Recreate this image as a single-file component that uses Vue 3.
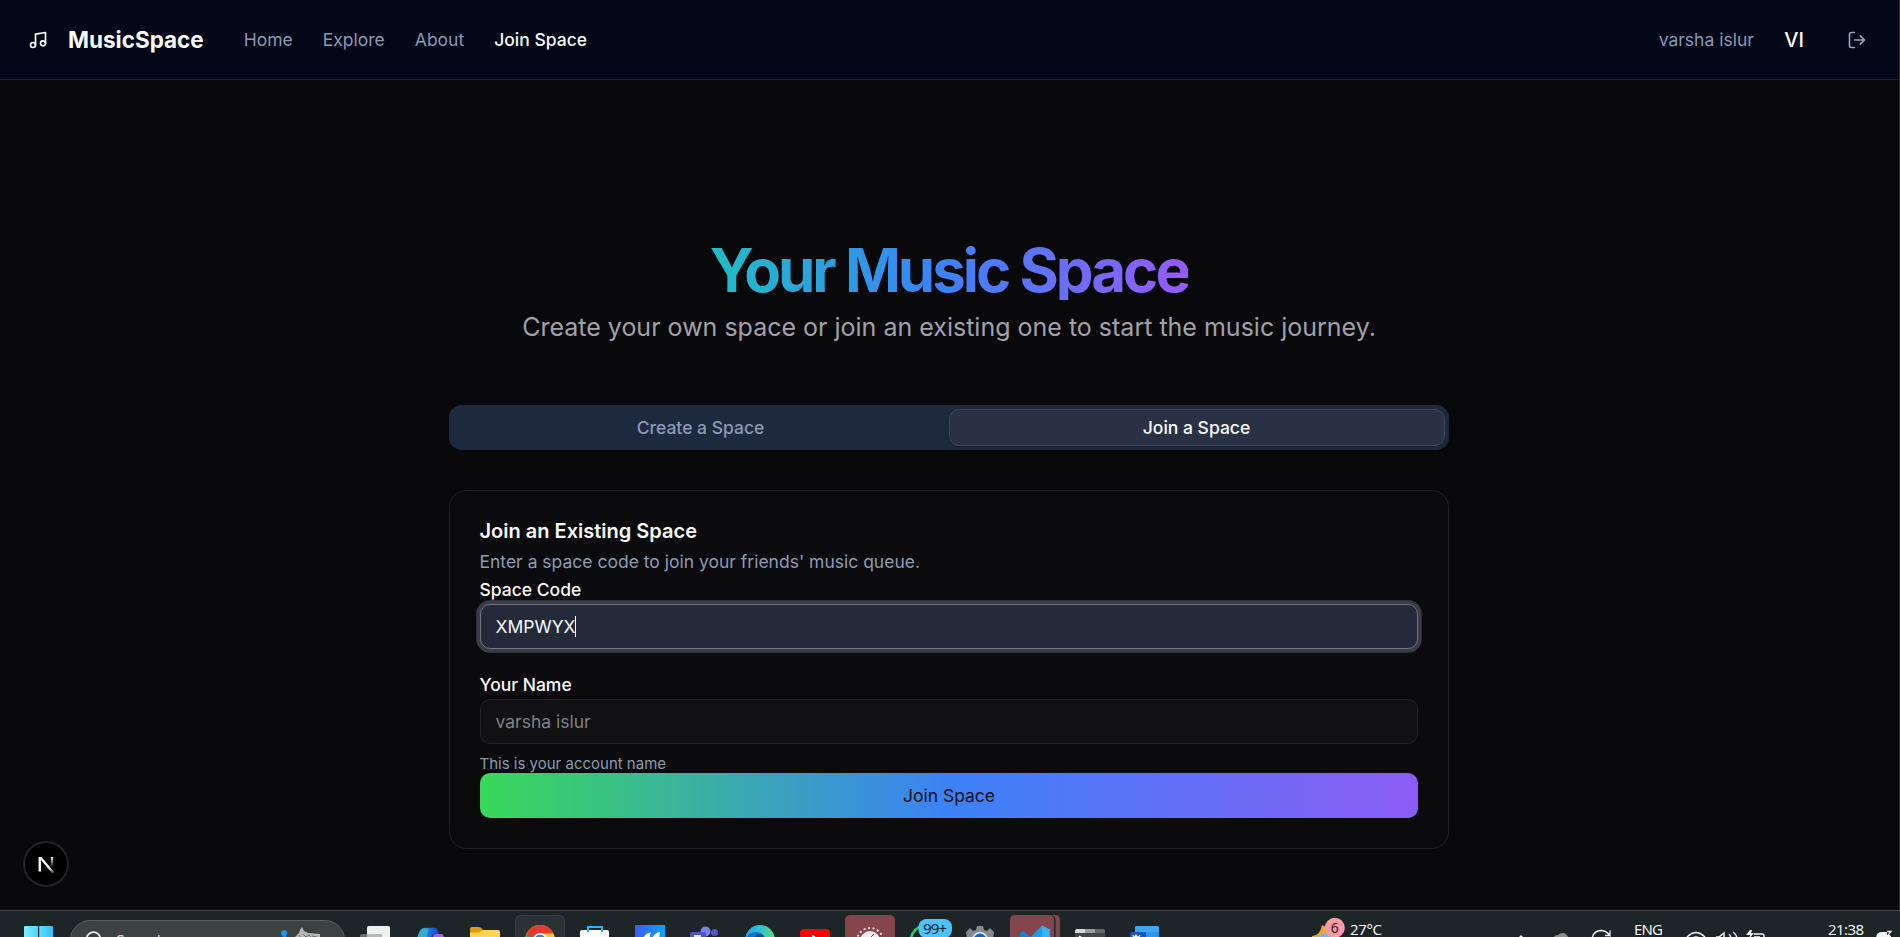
<script setup>
const links = ['Home', 'Explore', 'About']
</script>

<template>
  <div class="screen">
    <header class="topbar">
      <svg class="icon" viewBox="0 0 24 24"><path d="M9 18V5l12-2v13" /><circle cx="6" cy="18" r="3" /><circle cx="18" cy="16" r="3" /></svg>
      <span class="brand">MusicSpace</span>
      <nav>
        <a v-for="l in links" :key="l">{{ l }}</a>
        <a class="on">Join Space</a>
      </nav>
      <span class="user">varsha islur</span>
      <span class="initials">VI</span>
      <svg class="icon logout" viewBox="0 0 24 24"><path d="M9 21H5a2 2 0 0 1-2-2V5a2 2 0 0 1 2-2h4M16 17l5-5-5-5M21 12H9" /></svg>
    </header>

    <main>
      <h1><span>Your Music Space</span></h1>
      <p class="lead">Create your own space or join an existing one to start the music journey.</p>
      <div class="tabs">
        <div class="tab">Create a Space</div>
        <div class="tab active">Join a Space</div>
      </div>
      <section class="card">
        <h2>Join an Existing Space</h2>
        <p class="desc">Enter a space code to join your friends' music queue.</p>
        <div class="label">Space Code</div>
        <div class="field focused"><span>XMPWYX</span><i class="caret"></i></div>
        <div class="label second">Your Name</div>
        <div class="field disabled"><span>varsha islur</span></div>
        <p class="help">This is your account name</p>
        <div class="submit">Join Space</div>
      </section>
    </main>

    <div class="edge"></div>
    <svg class="badge-n" viewBox="0 0 48 48">
      <defs>
        <linearGradient id="nd" x1="0" y1="0" x2="0" y2="1"><stop offset=".65" stop-color="#fff" /><stop offset="1" stop-color="#fff" stop-opacity="0.1" /></linearGradient>
        <linearGradient id="nv" gradientUnits="userSpaceOnUse" x1="0" y1="16" x2="0" y2="28"><stop offset="0" stop-color="#fff" /><stop offset="1" stop-color="#fff" stop-opacity="0" /></linearGradient>
      </defs>
      <circle cx="24" cy="24" r="22" fill="#000" stroke="#242426" stroke-width="2" />
      <path d="M16.600 17h2.400v14.500h-2.400z" fill="#fff" />
      <path d="M16.600 17h2.800l13 15.200l-2 1.600z" fill="url(#nd)" />
      <path d="M28.800 17h2.400v11h-2.400z" fill="url(#nv)" />
    </svg>

    <footer class="taskbar">
      <svg class="cell start" viewBox="0 0 50 22">
        <defs><linearGradient id="win" x1="0" x2="1"><stop offset="0" stop-color="#7eeeff" /><stop offset="1" stop-color="#4fd3fa" /></linearGradient><linearGradient id="win2" x1="0" x2="1"><stop offset="0" stop-color="#5bdcfc" /><stop offset="1" stop-color="#36bcf6" /></linearGradient></defs>
        <path d="M10 12q0-1 1-1h13v13H10z" fill="url(#win)" /><path d="M25.200 11h12.800q1 0 1 1v12H25.200z" fill="url(#win2)" />
      </svg>
      <div class="search">
        <svg class="lens" viewBox="0 0 20 17"><circle cx="9.500" cy="8" r="6.800" fill="none" stroke="#e8eaea" stroke-width="1.800" /></svg>
        <span>Search</span>
        <svg class="art" viewBox="0 0 44 17">
          <path d="M2 5q0-3 4-3q3 1 2 4l-1 2q2 6-1 11H4q2-6 1-10Q2 8 2 5z" fill="#1893ee" />
          <path d="M16 9l4-4 1-3 2-3 2 4 4 2 12 1v5l-2-2-3 1v8H22l-3-6-3 1z" fill="#b9b9b3" />
          <path d="M24 6l3 3 3-2 3 3M20 7l2 3M28 12l5 1 3-3M33 8l5 1" stroke="#676a66" fill="none" stroke-width="1" />
        </svg>
      </div>
      <div class="apps">
        <svg class="cell" viewBox="0 0 50 22"><rect x="17" y="11" width="23" height="14" rx="1.500" fill="#eeefef" /><path d="M10 21q0-2 2-2h5v5h-7z" fill="#686d6d" /><path d="M17 19h14q1 0 1 1v4H17z" fill="#b7b9b9" /></svg>
        <svg class="cell" viewBox="0 0 50 22">
          <defs><linearGradient id="cp"><stop offset="0" stop-color="#2bb5d8" /><stop offset=".6" stop-color="#1e6fe0" /><stop offset="1" stop-color="#1745b4" /></linearGradient></defs>
          <path d="M12 24q2-9 5-10.500q1-.7 3-.7h9q3 0 4 3l1 3-6 1-3 4z" fill="url(#cp)" /><path d="M12 24q3-10 8-11q4 0 3 4l-2 7z" fill="#35aeca" /><path d="M27 24q1-5 4-5h5q3 0 3 5z" fill="#b15ce0" />
        </svg>
        <svg class="cell" viewBox="0 0 50 22"><path d="M10 14q0-2 2-2h7q2 0 4 3h7v8H10z" fill="#dd9b08" /><path d="M10 17.500h9l4-2.500h15q2 0 2 2v6H10z" fill="#ffd355" /></svg>
        <svg class="cell" viewBox="0 0 50 22">
          <rect x=".5" y=".5" width="49" height="30" rx="5" fill="#2b3233" stroke="#3a4142" />
          <circle cx="25" cy="25" r="15" fill="#fbc934" /><path d="M25 25L11.300 19A15 15 0 0 0 12 33z" fill="#23a455" /><path d="M11.500 18.500A15 15 0 0 1 38.500 18.500H25L17 25z" fill="#e33b2e" /><circle cx="25" cy="25" r="7" fill="#fff" /><circle cx="25" cy="25" r="5.500" fill="#3b7de8" />
        </svg>
        <svg class="cell" viewBox="0 0 50 22"><path d="M18 17v-5h14v5" fill="none" stroke="#28b6ee" stroke-width="2" /><path d="M10 24v-7q0-2 2-2h25q2 0 2 2v7z" fill="#fbfbfb" /><path d="M18 14v3M32 14v3" stroke="#28b6ee" stroke-width="2" /></svg>
        <svg class="cell" viewBox="0 0 50 22">
          <defs><linearGradient id="bl"><stop offset="0" stop-color="#3a5cf6" /><stop offset="1" stop-color="#0ba4ff" /></linearGradient></defs>
          <rect x="10" y="10" width="30" height="14" fill="url(#bl)" /><path d="M18 24q2-6 8-6.500l-2 6.500zM27 24q2-6 8-7l-1 7z" fill="#fff" />
        </svg>
        <svg class="cell" viewBox="0 0 50 22"><circle cx="25.500" cy="16.500" r="5" fill="#7b83eb" /><circle cx="34.500" cy="17.500" r="3.500" fill="#5059c9" /><rect x="10" y="17" width="16" height="8" rx="1.500" fill="#4c55bd" /><path d="M14 21h7" stroke="#fff" stroke-width="1.700" /></svg>
        <svg class="cell" viewBox="0 0 50 22">
          <defs><linearGradient id="ed"><stop offset="0" stop-color="#2a9be0" /><stop offset=".5" stop-color="#2fc2dc" /><stop offset="1" stop-color="#5cdb67" /></linearGradient></defs>
          <circle cx="25" cy="25" r="15" fill="url(#ed)" /><path d="M10 25q3-8 12-8q6 1 8 6H10z" fill="#0c74c8" /><path d="M19 24q1-4 5-5q5 1 6 4z" fill="#114d8e" />
        </svg>
        <svg class="cell" viewBox="0 0 50 22"><rect x="10" y="14" width="30" height="20" rx="4" fill="#f90303" /><path d="M22 19.500l6 4h-6z" fill="#fff" /></svg>
        <svg class="cell" viewBox="0 0 50 22">
          <rect width="50" height="30" rx="5" fill="#84454c" /><circle cx="25" cy="26" r="10" fill="#f5eeee" /><circle cx="25" cy="26" r="13" fill="none" stroke="#efdfe0" stroke-width="2.200" stroke-dasharray=".1 4.500" stroke-linecap="round" /><path d="M26 22l3-3" stroke="#84454c" />
        </svg>
        <svg class="cell whats" viewBox="0 0 50 22"><circle cx="25" cy="25" r="14" fill="none" stroke="#2bcf68" stroke-width="2.500" /><rect x="18.500" y="4" width="33.500" height="19" rx="8" fill="#4cc2ff" /><text x="23" y="19" class="count" textLength="24">99+</text></svg>
        <svg class="cell" viewBox="0 0 50 22"><path d="M21 15l1-4h6l1 4 3 1 3-3 4 4-1 7H12l-1-7 4-4 3 3z" fill="#858a91" /><circle cx="25" cy="25" r="8" fill="#e2e7eb" /><circle cx="25" cy="25" r="6.500" fill="#1767af" /></svg>
        <svg class="cell" viewBox="0 0 50 22">
          <path d="M5 0h34q5 0 5 5v17H0V5q0-5 5-5zM41.500 0h3.500q5 0 5 5v17h-4.500V5q0-3.500-4-5z" fill="#84454c" />
          <path d="M10 18l3-2 9 7H10z" fill="#1a80cd" /><path d="M19 24l13-13.500V24z" fill="#209de8" /><path d="M32 10.500l8 4V24h-8z" fill="#36b2f5" />
        </svg>
        <svg class="cell" viewBox="0 0 50 22"><rect x="10" y="14" width="30" height="12" rx="1.500" fill="#424445" /><path d="M10 18v-2q0-2 2-2h8v4z" fill="#d7d7d7" /><path d="M20 14h10v4H20z" fill="#9d9e9f" /><path d="M30 14h8q2 0 2 2v2H30z" fill="#656769" /><path d="M14 21l3 2" stroke="#fff" stroke-width="1.500" /></svg>
        <svg class="cell" viewBox="0 0 50 22"><path d="M15 24V13q0-2 2-2h20q2 0 2 2v11z" fill="#3096e8" /><path d="M15 13q0-2 2-2h20q2 0 2 2v4H15z" fill="#42a5ee" /><rect x="10" y="17" width="16" height="8" rx="1.500" fill="#1657c1" /><path d="M13 20l1 3 2-3 2 3 2-3" stroke="#fff" fill="none" stroke-width="1.200" /></svg>
      </div>
      <svg class="weather" viewBox="0 0 76 22">
        <path d="M2 21q8 0 10-11q6 2 8 6v7H2z" fill="#eda62b" /><ellipse cx="15" cy="22" rx="7" ry="3.500" fill="#86aef5" /><circle cx="24.800" cy="12.800" r="10" fill="#ff99a4" />
        <text x="20.800" y="17.500" class="six">6</text><text x="40" y="20" class="sys" textLength="32">27°C</text>
      </svg>
      <svg class="tray" viewBox="0 0 386 22">
        <path d="M8 24l3-3 3 3" stroke="#f0f0f0" fill="none" stroke-width="1.500" />
        <path d="M43 24q1-4 5-4 2-2 5-2t5 4l2 2z" fill="#8a8e8f" />
        <path d="M82 24q1-8 9-8.500q5 0 9 5v-5M100 20.500h-5" fill="none" stroke="#eee" stroke-width="1.300" />
        <text x="124" y="20" class="sys" textLength="29">ENG</text>
        <path d="M177 22q9-9 18 0M181 24q5-4 10 0" fill="none" stroke="#f3f3f3" stroke-width="1.500" />
        <path d="M206 22h3l5-4v5M219 19q2 2 2 5M223 17q4 3 4 7" fill="none" stroke="#f3f3f3" stroke-width="1.500" />
        <path d="M244 19h8q2 0 2 2v2M244 22h6" fill="none" stroke="#f3f3f3" stroke-width="1.500" /><path d="M240 15l-4 5h4l-1 4 5-6h-3l1-3z" fill="#f3f3f3" />
        <text x="318" y="20" class="sys" textLength="36">21:38</text>
        <path d="M366 24q0-7 6-7h5v3h3v4z" fill="#f3f3f3" /><path d="M377 16.500h4l-4 5h4" fill="none" stroke="#f3f3f3" stroke-width="1.300" />
      </svg>
    </footer>
  </div>
</template>

<style>
body { margin: 0; background: #09090b; overflow: hidden; }
</style>

<style scoped>
.screen { position: relative; width: 1900px; height: 937px; display: flex; flex-direction: column; overflow: hidden; background: #09090b; font-family: Inter, "Liberation Sans", sans-serif; font-size: 17.5px; color: #fafafa; }
h1, h2, p { margin: 0; }
.topbar { box-sizing: border-box; height: 80px; flex: none; display: flex; align-items: center; padding: 0 33px 0 28px; background: #020617; border-bottom: 1px solid #1c2236; }
.icon { width: 20px; height: 20px; fill: none; stroke: #f8fafc; stroke-width: 2; stroke-linecap: round; stroke-linejoin: round; }
.brand { margin-left: 20px; font-size: 22.5px; font-weight: 700; }
nav { display: flex; gap: 30px; margin-left: 40px; flex: 1; color: #8a9ab3; }
nav .on { color: #f8fafc; font-weight: 500; }
.user { color: #8a9ab3; }
.initials { font-size: 20px; font-weight: 500; margin-left: 30.5px; }
.logout { margin-left: 43px; stroke: #94a3b8; }
main { flex: 1; width: 1000px; margin-left: 449px; padding-top: 160px; display: flex; flex-direction: column; }
h1 { height: 70px; text-align: center; font-size: 60px; line-height: 60px; font-weight: 700; letter-spacing: -3px; }
h1 span { display: inline-block; height: 60px; background: linear-gradient(90deg, #20bdc4, #3b82f6 48%, #975af8); -webkit-background-clip: text; background-clip: text; color: transparent; }
.lead { text-align: center; font-size: 25px; line-height: 35px; color: #a1a1aa; white-space: nowrap; }
.tabs { box-sizing: border-box; height: 45px; margin-top: 60px; padding: 4px; display: flex; background: #1d293d; border-radius: 12.5px; font-weight: 500; color: #8b9bb5; }
.tab { box-sizing: border-box; flex: 1; display: flex; align-items: center; justify-content: center; padding-right: 1px; border: 1px solid transparent; border-radius: 10px; }
.tab.active { background: #283244; border-color: #414a5b; color: #fafafa; box-shadow: 0 1px 3px rgba(0, 0, 0, .2); }
.card { box-sizing: border-box; height: 359px; margin-top: 40px; padding: 30px; border: 1px solid #232325; border-radius: 17.5px; background: #0b0b0d; }
h2, .desc, .label, .help { margin-left: -0.5px; }
h2 { font-size: 20px; line-height: 20px; font-weight: 600; }
.desc { margin-top: 8px; line-height: 25px; color: #8a9bb5; }
.label { margin-top: 3px; line-height: 25px; font-weight: 500; }
.label.second { margin-top: 23px; }
.field { box-sizing: border-box; height: 45px; margin-top: 2px; padding: 0 14.5px; display: flex; align-items: center; border: 1px solid #232325; border-radius: 10px; }
.focused { background: #242a3a; border-color: #71757f; box-shadow: 0 0 0 3.75px #393c46; }
.disabled { background: #111113; color: #808082; }
.caret { width: 1px; height: 21px; background: #fff; }
.help { margin-top: 10px; font-size: 15px; line-height: 19px; color: #8a9bb5; }
.submit { height: 45px; display: flex; align-items: center; justify-content: center; border-radius: 10px; background: linear-gradient(90deg, #38d959, #3b82f6 50%, #8b5cf6); color: #0b1020; }
.edge { position: absolute; right: 0; top: 0; width: 1px; height: 910px; background: #29292c; }
.badge-n { position: absolute; left: 21.5px; top: 839.5px; width: 48px; height: 48px; }
.taskbar { box-sizing: border-box; height: 27px; flex: none; display: flex; align-items: flex-start; padding: 4px 0 0 14px; background: #1e2526; border-top: 1px solid #444849; overflow: hidden; }
.cell { width: 50px; height: 22px; flex: none; display: block; overflow: hidden; }
.whats { overflow: visible; }
.search { box-sizing: border-box; width: 275px; height: 40px; margin: 5px 5px 0 6px; padding: 0 15px; display: flex; align-items: flex-start; background: #3c4142; border: 1px solid #5b5f60; border-radius: 20px; color: #d8dada; font: 16px "Open Sans", sans-serif; }
.lens { width: 20px; height: 17px; margin-top: 10px; margin-left: -2px; }
.search span { line-height: 22px; margin: 9px 0 0 12px; flex: 1; }
.art { width: 44px; height: 17px; margin: 7px 6px 0 0; overflow: visible; }
.apps { display: flex; gap: 5px; }
.weather { width: 76px; height: 22px; margin-left: 140px; }
.tray { width: 386px; height: 22px; margin-left: 124px; }
.sys { font: 15px "Open Sans", sans-serif; fill: #fff; }
.six { font: 14px "Open Sans", sans-serif; fill: #111; }
.count { font: 15px "Noto Sans", sans-serif; fill: #0b1a24; }
</style>
